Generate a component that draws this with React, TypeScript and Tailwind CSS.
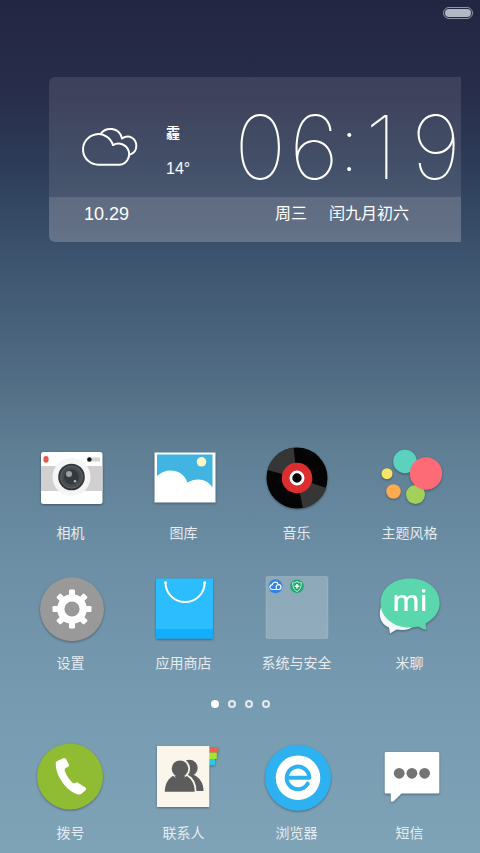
import type { ReactNode } from "react";

type AppItem = {
  name: string;
  icon: ReactNode;
};

const homeApps: AppItem[] = [
  { name: "相机", icon: <CameraIcon /> },
  { name: "图库", icon: <GalleryIcon /> },
  { name: "音乐", icon: <MusicIcon /> },
  { name: "主题风格", icon: <ThemeIcon /> },
  { name: "设置", icon: <SettingsIcon /> },
  { name: "应用商店", icon: <StoreIcon /> },
  { name: "系统与安全", icon: <FolderIcon /> },
  { name: "米聊", icon: <MiTalkIcon /> },
];

const dockApps: AppItem[] = [
  { name: "拨号", icon: <PhoneIcon /> },
  { name: "联系人", icon: <ContactsIcon /> },
  { name: "浏览器", icon: <BrowserIcon /> },
  { name: "短信", icon: <MessageIcon /> },
];

const pages = [1, 2, 3, 4];

export default function App() {
  return (
    <main className="flex min-h-screen flex-col bg-[linear-gradient(180deg,#222642_0%,#282d4b_11%,#2c3c58_19%,#3e5570_31%,#4f6a82_43%,#5f7f95_53%,#6c8fa5_66%,#779bb0_83%,#7ea3b7_100%)] font-['Roboto','Noto_Sans_CJK_SC',sans-serif] text-white">
      <header className="flex justify-end px-[7px] pt-[7px]">
        <Battery />
      </header>

      <WeatherClock />

      <div className="mt-auto">
        <AppGrid apps={homeApps} />

        <nav aria-label="Pages" className="mt-[27px] mb-[29px] flex justify-center gap-[9px]">
          {pages.map((page) => (
            <button
              key={page}
              aria-label={`Page ${page}`}
              className={
                page === 1
                  ? "size-2 rounded-full bg-white"
                  : "size-2 rounded-full border-2 border-[#e3ebf0]"
              }
            />
          ))}
        </nav>

        <AppGrid apps={dockApps} />
      </div>
    </main>
  );
}

function Battery() {
  return (
    <div className="h-3 w-[30px] rounded-full border border-[#9095a6] p-px">
      <div className="h-full rounded-full bg-[#b4b7c4]" />
    </div>
  );
}

function WeatherClock() {
  return (
    <section className="mt-[58px] mr-[19px] ml-[49px] overflow-hidden rounded-l-md bg-[#fff0f0]/11">
      <div className="flex h-[120px] items-center">
        <div className="flex flex-1 items-center gap-[27px] pt-5 pl-8">
          <CloudIcon />
          <div className="flex flex-col gap-[14px] pt-[6px]">
            <span className="text-sm leading-6 font-bold">霾</span>
            <span className="font-['Liberation_Sans',sans-serif] text-base leading-5">14°</span>
          </div>
        </div>

        <time className="flex pt-5 font-['Inter',sans-serif] text-[88px] leading-[88px] font-thin">
          <span className="flex gap-[3px]">
            <span>0</span>
            <span>6</span>
          </span>
          <span className="w-[26px] pl-1 font-['Roboto',sans-serif] text-[72px]">:</span>
          <span className="flex gap-[14px]">
            <span>1</span>
            <span>9</span>
          </span>
        </time>
      </div>

      <div className="flex h-[45px] items-center bg-white/12 pb-3 pl-[35px] text-base">
        <span className="flex-1 font-['Liberation_Sans',sans-serif] text-lg">10.29</span>
        <span>周三</span>
        <span className="pr-[52px] pl-[22px]">闰九月初六</span>
      </div>
    </section>
  );
}

function AppGrid({ apps }: { apps: AppItem[] }) {
  return (
    <div className="grid grid-cols-4 gap-y-6 px-[14px] last:pb-[10px]">
      {apps.map((app) => (
        <button key={app.name} className="flex flex-col items-center gap-[6px]">
          {app.icon}
          <span className="text-sm leading-5 whitespace-nowrap text-[#e6ecf0]">
            {app.name}
          </span>
        </button>
      ))}
    </div>
  );
}

function IconFrame({ children }: { children: ReactNode }) {
  return (
    <svg
      viewBox="0 0 80 80"
      aria-hidden="true"
      className="size-20 drop-shadow-[0_1px_1px_rgba(0,0,0,0.35)]"
    >
      {children}
    </svg>
  );
}

function CloudIcon() {
  return (
    <svg
      viewBox="0 0 58 42"
      aria-hidden="true"
      className="h-[42px] w-[58px] fill-none stroke-white stroke-2"
    >
      <path d="M18 38.7a15.3 15.3 0 1 1 14-19.6A10.6 10.6 0 1 1 38.5 38.7Z" strokeLinejoin="round" />
      <path d="M19.5 8C25 .5 38 1 41 12.3C48 8 55.3 12.5 55.3 20c0 4-2.5 7.5-6.8 8.7" />
    </svg>
  );
}

function CameraIcon() {
  return (
    <IconFrame>
      <rect x="10" y="15" width="61.5" height="52" rx="2.5" fill="#fff" />
      <rect x="10" y="29" width="61.5" height="25" fill="#d0d0d0" />
      <ellipse cx="15" cy="22.4" rx="2.6" ry="3.3" fill="#e8594a" />
      <rect x="56" y="20.5" width="13" height="4" rx="1" fill="#d3d3d3" />
      <circle cx="58.4" cy="22.5" r="2.2" fill="#161616" />
      <circle cx="40.5" cy="40" r="19" fill="#f5f5f5" />
      <circle cx="40.5" cy="40" r="13.3" fill="#33373b" />
      <circle cx="40.5" cy="40" r="11" fill="#474c50" stroke="#777b7e" strokeWidth="0.6" />
      <circle cx="40.5" cy="40" r="7.5" fill="#34393e" />
      <circle cx="38" cy="37" r="3" fill="#9aa2a8" />
      <circle cx="44" cy="44.3" r="1.3" fill="#a9b4bb" />
    </IconFrame>
  );
}

function GalleryIcon() {
  return (
    <IconFrame>
      <rect x="10.5" y="15.5" width="61" height="50" fill="#fff" />
      <path d="M13 17.5h55.5v33c-3-5-8-8-14-8-4 0-8 1.2-11 3-3-8-9-12-17-12-5 0-10 2-13.5 5.5Z" fill="#41b4e2" />
      <circle cx="57.5" cy="24.8" r="4.8" fill="#fcf8c4" />
    </IconFrame>
  );
}

function MusicIcon() {
  return (
    <IconFrame>
      <circle cx="40" cy="41" r="30.5" fill="#050505" />
      <path d="M40 41 10.6 33A30.5 30.5 0 0 1 36.5 10.7ZM40 41 69.3 51A30.5 30.5 0 0 1 45.8 71Z" fill="#363636" />
      <circle cx="40" cy="41" r="15.3" fill="#dc2d30" />
      <circle cx="40" cy="41" r="6.1" fill="#000" stroke="#fff" strokeWidth="2.8" />
    </IconFrame>
  );
}

function ThemeIcon() {
  return (
    <IconFrame>
      <circle cx="35" cy="24.5" r="11.8" fill="#5bd1be" />
      <circle cx="45.5" cy="57.5" r="9.5" fill="#a1d15b" />
      <circle cx="56" cy="36.5" r="16.2" fill="#fd6b76" />
      <circle cx="17" cy="36.7" r="5.5" fill="#f8e467" />
      <circle cx="23.5" cy="54.5" r="7.3" fill="#fcab50" />
    </IconFrame>
  );
}

function SettingsIcon() {
  const teeth = [0, 45, 90, 135, 180, 225, 270, 315];

  return (
    <IconFrame>
      <circle cx="41" cy="42.3" r="32" fill="#999" />
      {teeth.map((angle) => (
        <rect
          key={angle}
          x="38"
          y="22.5"
          width="6"
          height="9"
          rx="1.2"
          fill="#fff"
          transform={`rotate(${angle} 41 42)`}
        />
      ))}
      <circle cx="41" cy="42" r="11.2" fill="none" stroke="#fff" strokeWidth="7.2" />
    </IconFrame>
  );
}

function StoreIcon() {
  return (
    <IconFrame>
      <rect x="12" y="11.5" width="57" height="60" fill="#2bbdfd" />
      <rect x="12" y="62" width="57" height="9.5" fill="#12aefb" />
      <path d="M21.5 15.5a19.6 19.6 0 0 0 39.2 0" fill="none" stroke="#fff" strokeWidth="2" />
      <circle cx="21.5" cy="15.7" r="1.4" fill="#fff" />
      <circle cx="60.7" cy="15.7" r="1.4" fill="#fff" />
    </IconFrame>
  );
}

function FolderIcon() {
  return (
    <svg viewBox="0 0 80 80" aria-hidden="true" className="size-20">
      <rect x="9" y="9.5" width="62" height="62" rx="1.5" fill="#fff" fillOpacity="0.22" stroke="#fff" strokeOpacity="0.14" />
      <circle cx="18.5" cy="19.3" r="7" fill="#3484df" />
      <path
        d="M16.5 22.5h-1.2a2.3 2.3 0 0 1-.2-4.6 3.2 3.2 0 0 1 6-1M18.5 22.5h3a2.4 2.4 0 1 0-2.3-2.8v2.8h-2.7"
        fill="none"
        stroke="#fff"
        strokeWidth="1.2"
      />
      <circle cx="40" cy="19.3" r="6.8" fill="#1fa86d" />
      <path d="M40 14.5c1.5 1 3 1.2 4.3 1.3 0 4-.8 6.7-4.3 8.7-3.5-2-4.3-4.7-4.3-8.7 1.3-.1 2.8-.3 4.3-1.3Z" fill="none" stroke="#d6f5e5" strokeWidth="0.9" />
      <path d="M40 17v4.6M37.7 19.3h4.6" stroke="#fff" strokeWidth="1.5" />
    </svg>
  );
}

function MiTalkIcon() {
  return (
    <IconFrame>
      <path d="M11 40c-3 9 0 17 8 20.5l1 6 6.5-4C35 64 41 62 45 58L30 40Z" fill="#f4f8fc" />
      <path d="M40 11.5c17 0 29.7 10.5 29.7 24.5 0 8-5 15.5-14 20.5q-.5 2.5 1 6-5-.5-8.5-3c-3 .7-5 1-8.2 1C23 60.5 10.5 50 10.5 36S23 11.5 40 11.5Z" fill="#5ad7ac" />
      <text x="40" y="44" textAnchor="middle" fontSize="29" fill="#fff" className="font-['Noto_Sans',sans-serif] font-medium">
        mi
      </text>
    </IconFrame>
  );
}

function PhoneIcon() {
  return (
    <IconFrame>
      <circle cx="39" cy="39.5" r="33" fill="#90bc33" />
      <path d="M24.8 25.7q.3-1.3 2-2l5.6-2.5q1.8-.7 2.8 1.1l2.6 5q.8 1.5-.6 2.4l-2.6 1.4q-1.5.9-.9 2.7c1.5 4.5 4.5 8.8 7.6 11.8q1.3 1.2 2.6.5l1.8-.7q1.2-.3 2 .8l6.7 4.4q1.5 1 .3 2.5l-4.2 3.7q-1.4 1.2-3.5.6C36 54.5 24 38.5 24.8 25.7Z" fill="#fff" />
    </IconFrame>
  );
}

function ContactsIcon() {
  return (
    <IconFrame>
      <path d="M64 10h10.2v5.5H64Z" fill="#f25f50" />
      <path d="M64 15.5h8.8V22H64Z" fill="#a5e52d" />
      <path d="M64 22h7v6.3h-7Z" fill="#2dc7e8" />
      <rect x="13" y="9" width="52.3" height="61" fill="#faf6ec" />
      <g fill="#5c5c5c">
        <circle cx="45.5" cy="31" r="8.2" />
        <path d="M42 38h8c5.5 2.5 9.5 8 9.5 16H42Z" />
      </g>
      <g fill="#5c5c5c" stroke="#faf6ec" strokeWidth="3.6" paintOrder="stroke">
        <path d="M20.8 54.7c0-8.2 4-14 9.5-16.4h11c5.5 2.4 9.4 8.2 9.4 16.4Z" />
        <circle cx="36" cy="31.7" r="8.3" />
      </g>
      <path d="M30.5 38.5h11l-2 4h-7Z" fill="#5c5c5c" />
    </IconFrame>
  );
}

function BrowserIcon() {
  return (
    <IconFrame>
      <circle cx="41" cy="40.7" r="33" fill="#2db1f1" />
      <circle cx="41" cy="40.7" r="22.3" fill="#fff" />
      <path
        d="M30 40.7h22.3a11.3 11.3 0 1 0-1.6 6"
        fill="none"
        stroke="#2db1f1"
        strokeWidth="4"
        strokeLinecap="round"
        strokeLinejoin="round"
      />
    </IconFrame>
  );
}

function MessageIcon() {
  return (
    <IconFrame>
      <path d="M16 15h52q1.3 0 1.3 1.3v39q0 1.3-1.3 1.3H31.5l-7.5 7.5q-.5.6-1.5.6h-.7q-1 0-1-1v-7.1H16q-1.3 0-1.3-1.3v-39Q14.7 15 16 15Z" fill="#fff" />
      <circle cx="29.2" cy="36.3" r="5.4" fill="#747474" />
      <circle cx="41.9" cy="36.3" r="5.4" fill="#747474" />
      <circle cx="54.6" cy="36.3" r="5.4" fill="#747474" />
    </IconFrame>
  );
}
